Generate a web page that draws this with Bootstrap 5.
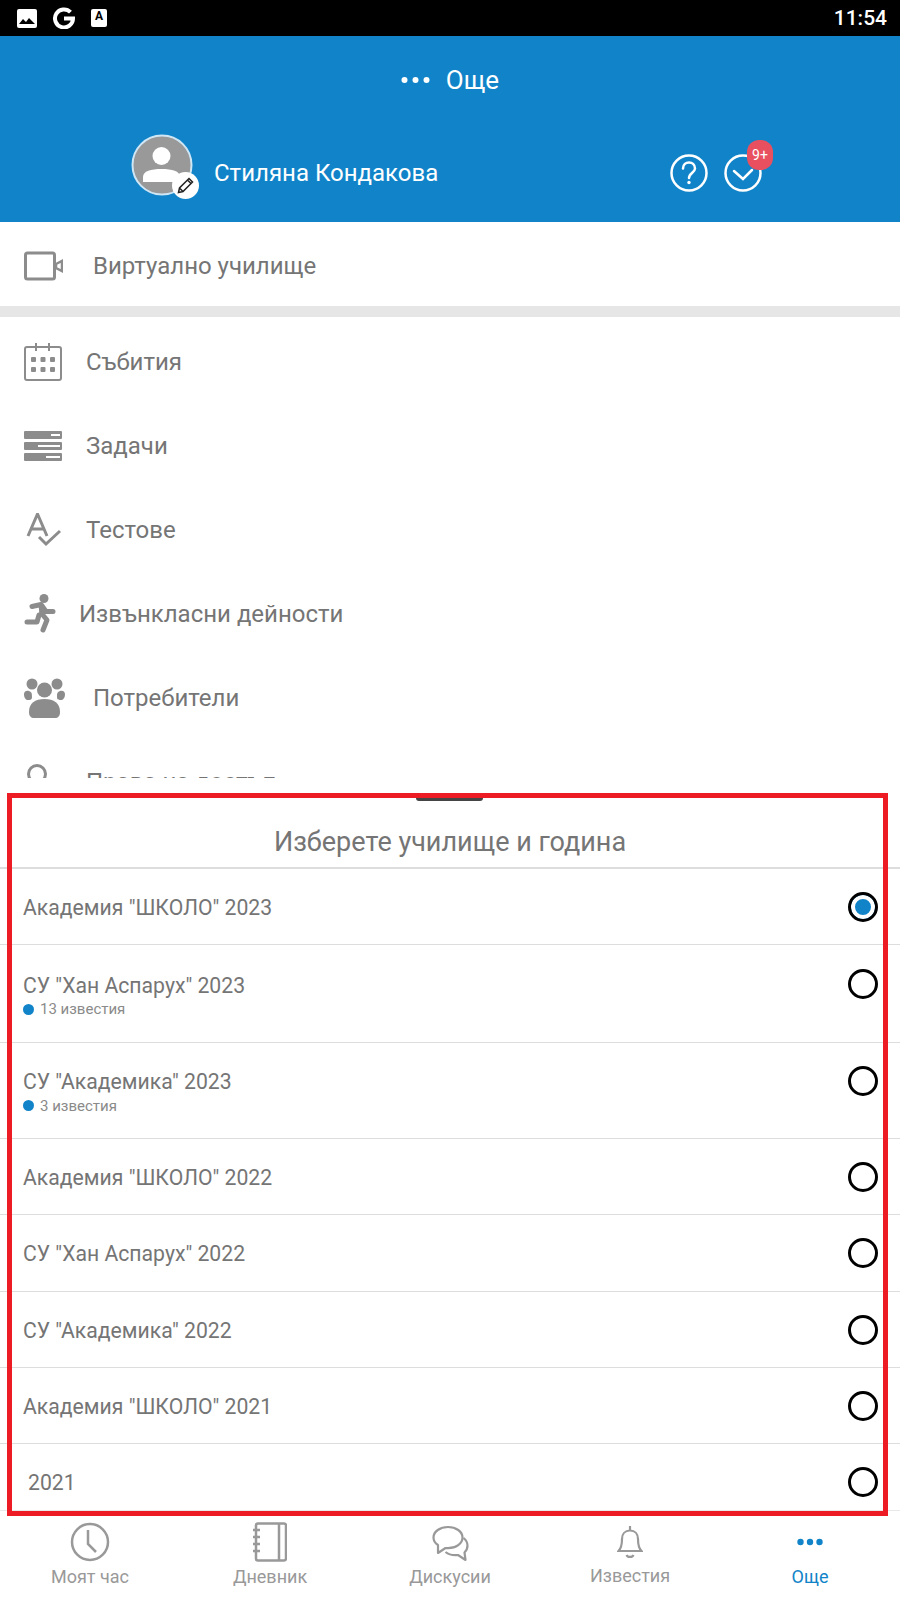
<!doctype html>
<html lang="bg"><head><meta charset="utf-8"><title>Още</title>
<link href="https://cdn.jsdelivr.net/npm/bootstrap@5.3.0/dist/css/bootstrap.min.css" rel="stylesheet">
<style>
html,body{margin:0;background:#fff}
body,.list-group-item{font-family:Roboto,"Liberation Sans",sans-serif}
.app-shell{height:1600px;width:900px;overflow:hidden;background:#fff}
.status-strip{height:36px;background:#000;color:#fff;padding:0 13px 0 17px;flex:none}
.g-mark{margin-left:15px}
.status-time{font-size:21px;font-weight:500;line-height:1}
.letter-tile{width:16px;height:18px;background:#fff;border-radius:2px;margin-left:16px;color:#000;font-size:12px;font-weight:700;line-height:14px;text-align:center}
.hero{height:186px;background:#1184c9;color:#fff;flex:none}
.hero-title{height:89px;font-size:26px;padding-top:4px;padding-bottom:5px}
.profile-line{padding-left:131px;padding-right:138px;height:80px}
.avatar-wrap{width:62px;height:62px;margin-top:-1px}
.pen-dot{right:-6px;bottom:-3px;width:27px;height:27px;border-radius:50%;background:#fff}
.profile-name{font-size:24px;margin-left:21px;margin-top:15px}
.help-group{margin-top:15px}
.check-wrap{width:38px;height:38px}
.badge-count{top:-14px;left:23px;width:26px;height:30px;background:#e8505f;border-radius:12px;font-size:14px;line-height:30px;text-align:center;color:#fff}
.menu-area{flex:1;min-height:0}
.menu-line{height:84px;color:#757575;font-size:24px;padding-left:24px}
.menu-first{padding-top:4px}
.menu-gap{height:11px;background:#e6e6e6;margin-bottom:3px}
.ico-slot{width:38px;flex:none}
.txt-video{margin-left:30px}
.txt-std{margin-left:24px}
.txt-run{margin-left:23px}
.txt-people{margin-left:28px}
.sheet{left:0;right:0;top:778px;height:733px;background:#fff;border-bottom:2px solid #e8e8e8}
.grip{position:absolute;left:416px;top:18px;width:67px;height:5px;background:#444;border-radius:0 0 3px 3px}
.sheet-head{height:91px;padding-top:46px;text-align:center;font-size:27px;color:#757575;line-height:36px;border-bottom:2px solid #ddd}
.school-row.list-group-item{border-color:#ddd;color:#757575;font-size:21.2px;padding:0 22px 0 23px;line-height:26px;border-width:0 0 1px;border-style:solid}
.row-a.list-group-item{height:76.4px}
.row-b.list-group-item{height:97.5px}
.row-d.list-group-item{height:96px}
.row-c.list-group-item{height:66px;border-bottom:0}
.row-inner{padding-top:26px}
.row-b .row-inner{padding-top:28px}
.row-b .ring{margin-top:24px}
.ring{width:30px;height:30px;border:3px solid #000;border-radius:50%;flex:none;margin-top:23px}
.ring-on{background:#1184c9;box-shadow:inset 0 0 0 4px #fff}
.notice-line{font-size:15px;color:#8a8a8a;line-height:18px;margin-top:2px}
.row-b .notice-line{margin-top:1px}
.notice-dot{width:11px;height:11px;background:#1184c9;border-radius:50%;margin-right:6px}
.shift-txt{padding-left:5px}
.tabbar{height:89px;flex:none}
.tab-cell{width:180px;color:#999;font-size:18px;line-height:20px;padding-top:11px}
.tab-cell svg{display:block;height:40px;margin-bottom:5px}
.tab-on{color:#1184c9}
.lift-1{margin-top:-1px}
.red-frame{left:7px;top:793px;width:881px;height:723px;border:5px solid #ed1c24;pointer-events:none;z-index:5}
</style></head>
<body>
<div class="app-shell position-relative d-flex flex-column">
  <div class="status-strip d-flex align-items-center">
    <svg width="20" height="19" viewBox="0 0 20 19"><rect width="20" height="19" rx="2" fill="#fff"/><path d="M2 15l4-5 3 3 3-4 6 6z" fill="#000"/></svg>
    <svg class="g-mark" width="23" height="22" viewBox="0 0 23 22" fill="none" stroke="#fff" stroke-width="4"><path d="M18.500 5.200A9 9 0 1 0 21 11.500H12"/></svg>
    <div class="letter-tile">A</div>
    <div class="status-time ms-auto">11:54</div>
  </div>
  <div class="hero">
    <div class="hero-title d-flex align-items-center justify-content-center">
      <svg width="29" height="8" viewBox="0 0 29 8" fill="#fff"><circle cx="3.500" cy="4" r="3"/><circle cx="14.500" cy="4" r="3"/><circle cx="25.500" cy="4" r="3"/></svg>
      <span class="ms-3">Още</span>
    </div>
    <div class="profile-line d-flex align-items-center">
      <div class="avatar-wrap position-relative">
        <svg width="62" height="62" viewBox="0 0 62 62"><circle cx="31" cy="31" r="29.500" fill="#999" stroke="#cfe6f5" stroke-width="2"/><circle cx="30.500" cy="22" r="9" fill="#fff"/><path d="M12 48v-5c0-6 8-8 18.500-8S49 37 49 43v5z" fill="#fff"/></svg>
        <div class="pen-dot position-absolute d-flex align-items-center justify-content-center">
          <svg width="17" height="17" viewBox="0 0 17 17" fill="none" stroke="#222" stroke-width="1.500"><path d="M1.500 15.500l1-4.500L12 1.500 15.500 5 6 14.500zM2.500 11L6 14.500M10.500 3L14 6.500"/></svg>
        </div>
      </div>
      <div class="profile-name">Стиляна Кондакова</div>
      <div class="help-group ms-auto d-flex align-items-center gap-3">
        <svg width="38" height="38" viewBox="0 0 38 38" fill="none" stroke="#fff" stroke-width="2.500"><circle cx="19" cy="19" r="17.500"/><path d="M13 14.500c0-8 12-8 12 0 0 4-6 4.500-6 9.500" stroke-linecap="round"/><circle cx="19" cy="28.500" r="1.700" fill="#fff" stroke="none"/></svg>
        <div class="check-wrap position-relative">
          <svg width="38" height="38" viewBox="0 0 38 38" fill="none" stroke="#fff" stroke-width="2.500"><circle cx="19" cy="19" r="17.500"/><path d="M10 17l9 8 9-9" stroke-linecap="round"/></svg>
          <div class="badge-count position-absolute">9+</div>
        </div>
      </div>
    </div>
  </div>
  <div class="menu-area">
    <div class="menu-line menu-first d-flex align-items-center">
      <svg width="39" height="30" viewBox="0 0 39 30" fill="none" stroke="#8c8c8c" stroke-width="3" class="flex-none"><rect x="1.500" y="2" width="29" height="26" rx="2"/><path d="M32 13l6-3v10l-6-3z" stroke-width="2.500"/></svg>
      <span class="txt-video">Виртуално училище</span>
    </div>
    <div class="menu-gap"></div>
    <div class="menu-line d-flex align-items-center">
      <svg class="ico-slot" width="38" height="38" viewBox="0 0 38 38" fill="none" stroke="#8c8c8c" stroke-width="2"><rect x="1" y="4" width="36" height="33" rx="2"/><path d="M12 0v8M25 0v8"/><g fill="#8c8c8c" stroke="none"><rect x="7" y="14" width="5" height="5" rx="1"/><rect x="16.500" y="14" width="5" height="5" rx="1"/><rect x="26" y="14" width="5" height="5" rx="1"/><rect x="7" y="24" width="5" height="5" rx="1"/><rect x="16.500" y="24" width="5" height="5" rx="1"/><rect x="26" y="24" width="5" height="5" rx="1"/></g></svg>
      <span class="txt-std">Събития</span>
    </div>
    <div class="menu-line d-flex align-items-center">
      <svg class="ico-slot" width="38" height="30" viewBox="0 0 38 30"><rect width="38" height="8" rx="1" fill="#8c8c8c"/><rect y="11" width="38" height="8" rx="1" fill="#8c8c8c"/><rect y="22" width="38" height="8" rx="1" fill="#8c8c8c"/><rect x="27" y="3" width="9" height="2" fill="#fff"/><rect x="14" y="14" width="22" height="2" fill="#fff"/><rect x="22" y="25" width="14" height="2" fill="#fff"/></svg>
      <span class="txt-std">Задачи</span>
    </div>
    <div class="menu-line d-flex align-items-center">
      <svg class="ico-slot" width="38" height="34" viewBox="0 0 38 34" fill="none" stroke="#8c8c8c" stroke-width="3"><path d="M4 23L13.500 1 23 23M8 16h11"/><path d="M15 24l7 7 14-13"/></svg>
      <span class="txt-std">Тестове</span>
    </div>
    <div class="menu-line d-flex align-items-center">
      <svg width="32" height="40" viewBox="0 0 32 40" class="flex-none"><circle cx="20" cy="4.500" r="4.500" fill="#8c8c8c"/><path d="M8 12.500l9-2 5 7h7M17 11l1 9 5 6-4 10M15 21l-2 7H3" fill="none" stroke="#8c8c8c" stroke-width="5" stroke-linecap="round" stroke-linejoin="round"/><path d="M15 10l5 0 1 10-5 2z" fill="#8c8c8c"/></svg>
      <span class="txt-run">Извънкласни дейности</span>
    </div>
    <div class="menu-line d-flex align-items-center">
      <svg width="41" height="40" viewBox="0 0 41 40" class="flex-none" fill="#8c8c8c"><circle cx="8" cy="6" r="5.500"/><circle cx="33" cy="6" r="5.500"/><path d="M0 16c0-3 3-4 5-3 3 1 3 3 3 6s-2 3-4 3-4-2-4-6zM41 16c0-3-3-4-5-3-3 1-3 3-3 6s2 3 4 3 4-2 4-6z"/><circle cx="20.500" cy="12" r="7.500"/><path d="M5 34c0-9 6-13 15.500-13S36 25 36 34c0 4-2 6-5 6H10c-3 0-5-2-5-6z"/></svg>
      <span class="txt-people">Потребители</span>
    </div>
    <div class="menu-line d-flex align-items-center">
      <svg width="38" height="38" viewBox="0 0 38 38" class="flex-none" fill="none" stroke="#8c8c8c" stroke-width="3"><circle cx="13" cy="11" r="8.500"/><path d="M3 32c0-7 5-10 12-10"/></svg>
      <span class="txt-std">Права на достъп</span>
    </div>
  </div>
  <div class="tabbar d-flex">
    <div class="tab-cell d-flex flex-column align-items-center">
      <svg width="40" height="40" viewBox="0 0 40 40" fill="none" stroke="#999" stroke-width="2.500"><circle cx="20" cy="20" r="18"/><path d="M18 8v14l8 8"/></svg><span>Моят час</span>
    </div>
    <div class="tab-cell d-flex flex-column align-items-center">
      <svg width="34" height="40" viewBox="0 0 34 40" fill="none" stroke="#999" stroke-width="2.500"><rect x="3" y="1.500" width="30" height="37" rx="2"/><path d="M26 2v36M0 8h7M0 15h7M0 22h7M0 29h7"/></svg><span>Дневник</span>
    </div>
    <div class="tab-cell d-flex flex-column align-items-center">
      <svg width="40" height="40" viewBox="0 0 40 40" fill="none" stroke="#999" stroke-width="2.200" stroke-linejoin="round"><path d="M18 5C10 5 3.500 9.500 3.500 15.500c0 3.500 2 6 4.500 7.500v8l7.500-5c1 .2 1.700.2 2.500.2 8 0 14.500-4.700 14.500-10.700S26 5 18 5z"/><path d="M33.500 16c2.500 2 4 4.500 4 7.500 0 3.500-1.500 5.500-3 7l1 7.500-7.500-5c-5 .5-9.500-.5-12.500-3"/></svg><span>Дискусии</span>
    </div>
    <div class="tab-cell d-flex flex-column align-items-center">
      <svg width="26" height="40" viewBox="0 0 26 40" fill="none" stroke="#999" stroke-width="2.200"><path d="M1.500 29c3-3 3.500-6 3.500-12 0-5 3-8.500 8-8.500s8 3.500 8 8.500c0 6 .5 9 3.500 12z"/><path d="M13 4v4M9.500 33c1 2.500 6 2.500 7 0"/></svg><span class="lift-1">Известия</span>
    </div>
    <div class="tab-cell tab-on d-flex flex-column align-items-center">
      <svg width="26" height="40" viewBox="0 0 26 40" fill="#1184c9"><circle cx="3.500" cy="20" r="3.200"/><circle cx="13" cy="20" r="3.200"/><circle cx="22.500" cy="20" r="3.200"/></svg><span>Още</span>
    </div>
  </div>
  <div class="sheet position-absolute">
    <div class="grip"></div>
    <div class="sheet-head">Изберете училище и година</div>
    <div class="list-group list-group-flush">
      <div class="school-row row-a list-group-item d-flex justify-content-between align-items-start"><div class="row-inner">Академия "ШКОЛО" 2023</div><div class="ring ring-on"></div></div>
      <div class="school-row row-b list-group-item d-flex justify-content-between align-items-start"><div class="row-inner">СУ "Хан Аспарух" 2023<div class="notice-line d-flex align-items-center"><span class="notice-dot"></span>13 известия</div></div><div class="ring"></div></div>
      <div class="school-row row-d list-group-item d-flex justify-content-between align-items-start"><div class="row-inner">СУ "Академика" 2023<div class="notice-line d-flex align-items-center"><span class="notice-dot"></span>3 известия</div></div><div class="ring"></div></div>
      <div class="school-row row-a list-group-item d-flex justify-content-between align-items-start"><div class="row-inner">Академия "ШКОЛО" 2022</div><div class="ring"></div></div>
      <div class="school-row row-a list-group-item d-flex justify-content-between align-items-start"><div class="row-inner">СУ "Хан Аспарух" 2022</div><div class="ring"></div></div>
      <div class="school-row row-a list-group-item d-flex justify-content-between align-items-start"><div class="row-inner">СУ "Академика" 2022</div><div class="ring"></div></div>
      <div class="school-row row-a list-group-item d-flex justify-content-between align-items-start"><div class="row-inner">Академия "ШКОЛО" 2021</div><div class="ring"></div></div>
      <div class="school-row row-c list-group-item d-flex justify-content-between align-items-start"><div class="row-inner shift-txt">2021</div><div class="ring"></div></div>
    </div>
  </div>
  <div class="red-frame position-absolute"></div>
</div>
<script src="https://cdn.jsdelivr.net/npm/bootstrap@5.3.0/dist/js/bootstrap.bundle.min.js"></script>
</body></html>
